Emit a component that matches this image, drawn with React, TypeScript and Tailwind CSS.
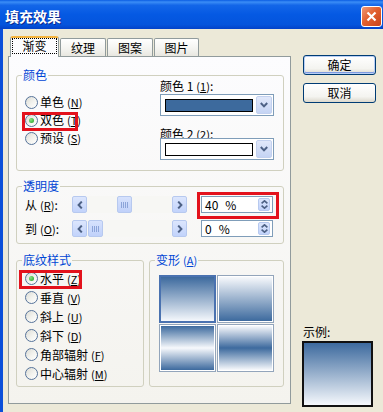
import React from "react";

// 小按钮里的箭头
function Arrow({ dir }: { dir: "left" | "right" }) {
  return (
    <svg width="6" height="8" viewBox="0 0 6 8">
      <path
        d={dir === "left" ? "M4.8 0.6 L1.6 4 L4.8 7.4" : "M1.2 0.6 L4.4 4 L1.2 7.4"}
        stroke="#4D6185"
        strokeWidth="2"
        fill="none"
      />
    </svg>
  );
}

function Radio({ on }: { on?: boolean }) {
  return (
    <span className="flex h-[13px] w-[13px] shrink-0 items-center justify-center rounded-full border border-[#56739A] bg-[linear-gradient(135deg,#DCDCD5_0%,#F3F3EF_55%,#FFFFFF_100%)]">
      {on && (
        <span className="h-[5px] w-[5px] rounded-full bg-[radial-gradient(circle_at_35%_35%,#86E486,#1F9B1F)]" />
      )}
    </span>
  );
}

function Key({ k }: { k: string }) {
  return (
    <span className="ml-[3px] text-[11px]">
      (<span className="underline underline-offset-1">{k}</span>)
    </span>
  );
}

function RadioRow({ label, k, on, row }: { label: string; k: string; on?: boolean; row: string }) {
  return (
    <div className={`flex items-center gap-[2px] ${row}`}>
      <Radio on={on} />
      <span className="leading-[14px]">
        {label}
        <Key k={k} />
      </span>
    </div>
  );
}

function Group({ title, className, children }: { title: React.ReactNode; className: string; children: React.ReactNode }) {
  return (
    <fieldset className={`rounded-[3px] border border-[#D0D0BF] ${className}`}>
      <legend className="ml-[5px] px-[1px] text-[12px] leading-[16px] text-[#0046D5]">{title}</legend>
      <div className="-mt-[8px]">{children}</div>
    </fieldset>
  );
}

function ScrollBtn({ dir }: { dir: "left" | "right" }) {
  return (
    <span className="flex h-[17px] w-[15px] shrink-0 items-center justify-center rounded-[2px] border border-[#B7C9EF] bg-[linear-gradient(180deg,#DCE6FD_0%,#C2D3FB_100%)]">
      <Arrow dir={dir} />
    </span>
  );
}

function Thumb() {
  return (
    <span className="flex h-[17px] w-[15px] shrink-0 items-center justify-center gap-[1px] rounded-[2px] border border-[#B7C9EF] bg-[linear-gradient(180deg,#D7E2FD_0%,#C0D1FA_100%)]">
      <span className="h-[6px] w-[1px] bg-[#8CA4D9]" />
      <span className="h-[6px] w-[1px] bg-[#8CA4D9]" />
      <span className="h-[6px] w-[1px] bg-[#8CA4D9]" />
      <span className="h-[6px] w-[1px] bg-[#8CA4D9]" />
    </span>
  );
}

function Slider({ before }: { before: string }) {
  return (
    <div className="flex h-[17px] w-[115px]">
      <ScrollBtn dir="left" />
      <div className="flex flex-1 bg-[#F7F7F4]">
        <span className={before} />
        <Thumb />
      </div>
      <ScrollBtn dir="right" />
    </div>
  );
}

function Spin({ num }: { num: string }) {
  return (
    <div className="ml-[14px] flex h-[17px] w-[72px] items-center border border-[#7F9DB9] bg-white pl-[3px] pr-[2px]">
      <span className="leading-[14px]">{num}</span>
      <span className="ml-[7px] leading-[14px]">%</span>
      <span className="ml-auto flex h-[13px] w-[12px] flex-col items-center justify-center gap-[1px] rounded-[2px] border border-[#B7C9EF] bg-[linear-gradient(180deg,#DCE6FD_0%,#C2D3FB_100%)]">
        <svg width="7" height="4" viewBox="0 0 7 4">
          <path d="M0.6 3.4 L3.5 0.8 L6.4 3.4" stroke="#4D6185" strokeWidth="1.6" fill="none" />
        </svg>
        <svg width="7" height="4" viewBox="0 0 7 4">
          <path d="M0.6 0.6 L3.5 3.2 L6.4 0.6" stroke="#4D6185" strokeWidth="1.6" fill="none" />
        </svg>
      </span>
    </div>
  );
}

function ColorCombo({ swatch }: { swatch: string }) {
  return (
    <div className="flex h-[22px] w-[114px] items-center border border-[#7F9DB9] bg-white pl-[4px] pr-[1px]">
      <span className={`h-[13px] w-[88px] border border-black ${swatch}`} />
      <span className="ml-auto flex h-[18px] w-[16px] items-center justify-center rounded-[2px] border border-[#C3D1EF] bg-[linear-gradient(180deg,#E1E8FA_0%,#C5D4F4_100%)]">
        <svg width="8" height="6" viewBox="0 0 8 6">
          <path d="M0.8 1 L4 4.4 L7.2 1" stroke="#4D6185" strokeWidth="2" fill="none" />
        </svg>
      </span>
    </div>
  );
}

export default function App() {
  return (
    <div className="relative flex h-[412px] w-[383px] flex-col overflow-hidden bg-[#ECE9D8] font-['Noto_Sans_CJK_SC','Noto_Sans',sans-serif] text-[12px] text-black">
      {/* 标题栏 */}
      <div className="flex h-[29px] shrink-0 bg-[linear-gradient(180deg,#0A5DE3_0%,#3B8DF6_7%,#1366E8_18%,#0559E3_50%,#0454DC_85%,#0342C8_100%)] pl-[5px]">
        <span className="mt-[7px] text-[14px] font-bold leading-[18px] text-white [text-shadow:1px_1px_0_#0B2A8F]">
          填充效果
        </span>
        <span className="ml-auto mr-[1px] mt-[6px] flex h-[21px] w-[21px] items-center justify-center rounded-[3px] border border-white bg-[linear-gradient(135deg,#F09A76_0%,#E2602F_45%,#C9421A_100%)]">
          <svg width="11" height="11" viewBox="0 0 11 11">
            <path d="M1.5 1.5 L9.5 9.5 M9.5 1.5 L1.5 9.5" stroke="white" strokeWidth="2.2" />
          </svg>
        </span>
      </div>

      <div className="flex flex-1 border-l-[3px] border-[#0B4FD9]">
        {/* 选项卡 + 面板 */}
        <div className="ml-[5px] flex flex-col pt-[7px]">
          <div className="flex h-[20px] items-end">
            <div className="relative z-10 -mb-[1px] ml-[2px] flex h-[21px] w-[49px] items-start justify-center rounded-t-[3px] border-x border-t-2 border-x-[#919B9C] border-t-[#F5B43E] bg-[#FCFCFE]">
              <span className="flex h-[16px] w-[45px] items-center justify-center border border-dotted border-black leading-[14px]">
                渐变
              </span>
            </div>
            <div className="ml-[1px] flex h-[18px] w-[46px] items-center justify-center rounded-t-[2px] border-x border-t border-[#919B9C] bg-[linear-gradient(180deg,#FFFFFF_0%,#F3F3EF_60%,#E8E7E0_100%)] pt-[1px] leading-[14px]">
              纹理
            </div>
            <div className="ml-[1px] flex h-[18px] w-[46px] items-center justify-center rounded-t-[2px] border-x border-t border-[#919B9C] bg-[linear-gradient(180deg,#FFFFFF_0%,#F3F3EF_60%,#E8E7E0_100%)] pt-[1px] leading-[14px]">
              图案
            </div>
            <div className="ml-[1px] flex h-[18px] w-[45px] items-center justify-center rounded-t-[2px] border-x border-t border-[#919B9C] bg-[linear-gradient(180deg,#FFFFFF_0%,#F3F3EF_60%,#E8E7E0_100%)] pt-[1px] leading-[14px]">
              图片
            </div>
          </div>

          <div className="flex h-[348px] w-[283px] flex-col border border-[#919B9C] bg-[linear-gradient(180deg,#FCFCFE_0%,#F4F3EE_100%)] pl-[7px] pt-[10px]">
            {/* 颜色 */}
            <Group title="颜色" className="h-[104px] w-[268px]">
              <div className="flex">
                <div className="ml-[8px] flex w-[135px] flex-col pt-[18px]">
                  <RadioRow label="单色" k="N" row="h-[18px]" />
                  <RadioRow label="双色" k="T" on row="h-[18px]" />
                  <RadioRow label="预设" k="S" row="h-[18px]" />
                </div>
                <div className="flex flex-col pt-[3px]">
                  <div className="flex h-[16px] items-center">
                    颜色 1<Key k="1" />:
                  </div>
                  <ColorCombo swatch="bg-[#3D6A9D]" />
                  <div className="mt-[10px] flex h-[16px] items-center">
                    颜色 2<Key k="2" />:
                  </div>
                  <div className="-mt-[4px]">
                    <ColorCombo swatch="bg-white" />
                  </div>
                </div>
              </div>
            </Group>

            {/* 透明度 */}
            <Group title="透明度" className="mt-[7px] h-[66px] w-[268px]">
              <div className="flex flex-col gap-[7px] pl-[8px] pt-[10px]">
                <div className="flex h-[17px] items-center">
                  <span className="w-[47px] leading-[14px]">
                    从<Key k="R" />:
                  </span>
                  <Slider before="w-[30px]" />
                  <Spin num="40" />
                </div>
                <div className="flex h-[17px] items-center">
                  <span className="w-[47px] leading-[14px]">
                    到<Key k="O" />:
                  </span>
                  <Slider before="w-[1px]" />
                  <Spin num="0" />
                </div>
              </div>
            </Group>

            <div className="mt-[8px] flex gap-[5px]">
              {/* 底纹样式 */}
              <Group title="底纹样式" className="h-[135px] w-[128px]">
                <div className="flex flex-col pl-[8px] pt-[9px]">
                  <RadioRow label="水平" k="Z" on row="h-[19px]" />
                  <RadioRow label="垂直" k="V" row="h-[19px]" />
                  <RadioRow label="斜上" k="U" row="h-[19px]" />
                  <RadioRow label="斜下" k="D" row="h-[19px]" />
                  <RadioRow label="角部辐射" k="F" row="h-[19px]" />
                  <RadioRow label="中心辐射" k="M" row="h-[19px]" />
                </div>
              </Group>

              {/* 变形 */}
              <Group
                title={
                  <>
                    变形<Key k="A" />
                  </>
                }
                className="h-[135px] w-[135px]"
              >
                <div className="grid w-fit grid-cols-2 gap-[1px] pl-[9px] pt-[15px]">
                  <div className="h-[48px] w-[57px] border-2 border-[#4A72B0] bg-[linear-gradient(180deg,#3D6A9E_0%,#F5F8FC_100%)]" />
                  <div className="h-[48px] w-[57px] border border-[#93A5BB] bg-white p-[1px]">
                    <div className="h-full w-full bg-[linear-gradient(180deg,#F7F9FC_0%,#3D6A9E_100%)]" />
                  </div>
                  <div className="h-[48px] w-[57px] border border-[#93A5BB] bg-white p-[1px]">
                    <div className="h-full w-full bg-[linear-gradient(180deg,#3D6A9E_0%,#F7F9FC_50%,#3D6A9E_100%)]" />
                  </div>
                  <div className="h-[48px] w-[57px] border border-[#93A5BB] bg-white p-[1px]">
                    <div className="h-full w-full bg-[linear-gradient(180deg,#F7F9FC_0%,#3D6A9E_50%,#F7F9FC_100%)]" />
                  </div>
                </div>
              </Group>
            </div>
          </div>
        </div>

        {/* 右侧按钮 + 示例 */}
        <div className="ml-[12px] flex w-[73px] flex-col pt-[26px]">
          <button className="flex h-[20px] w-[73px] items-center justify-center rounded-[3px] border border-[#003C74] bg-[linear-gradient(180deg,#FFFFFF_0%,#F4F4F0_70%,#DCD8CC_100%)] leading-[14px] shadow-[inset_0_0_0_1px_#B9CFF5,inset_0_-1px_0_1px_#7E9AE0]">
            确定
          </button>
          <button className="mt-[8px] flex h-[20px] w-[73px] items-center justify-center rounded-[3px] border border-[#003C74] bg-[linear-gradient(180deg,#FFFFFF_0%,#F4F4F0_70%,#DCD8CC_100%)] leading-[14px]">
            取消
          </button>
          <span className="mt-[222px] leading-[14px]">示例:</span>
          <div className="-ml-[1px] mt-[2px] h-[66px] w-[71px] border-2 border-[#111] bg-[linear-gradient(180deg,#3D6A9E_0%,#F5F8FC_100%)]" />
        </div>
      </div>

      {/* 红色标注框 */}
      <div className="absolute left-[22px] top-[112px] h-[19px] w-[56px] border-[3px] border-[#E3121C]" />
      <div className="absolute left-[197px] top-[192px] h-[27px] w-[82px] border-[3px] border-[#E3121C]" />
      <div className="absolute left-[19px] top-[270px] h-[19px] w-[63px] border-[3px] border-[#E3121C]" />
    </div>
  );
}
